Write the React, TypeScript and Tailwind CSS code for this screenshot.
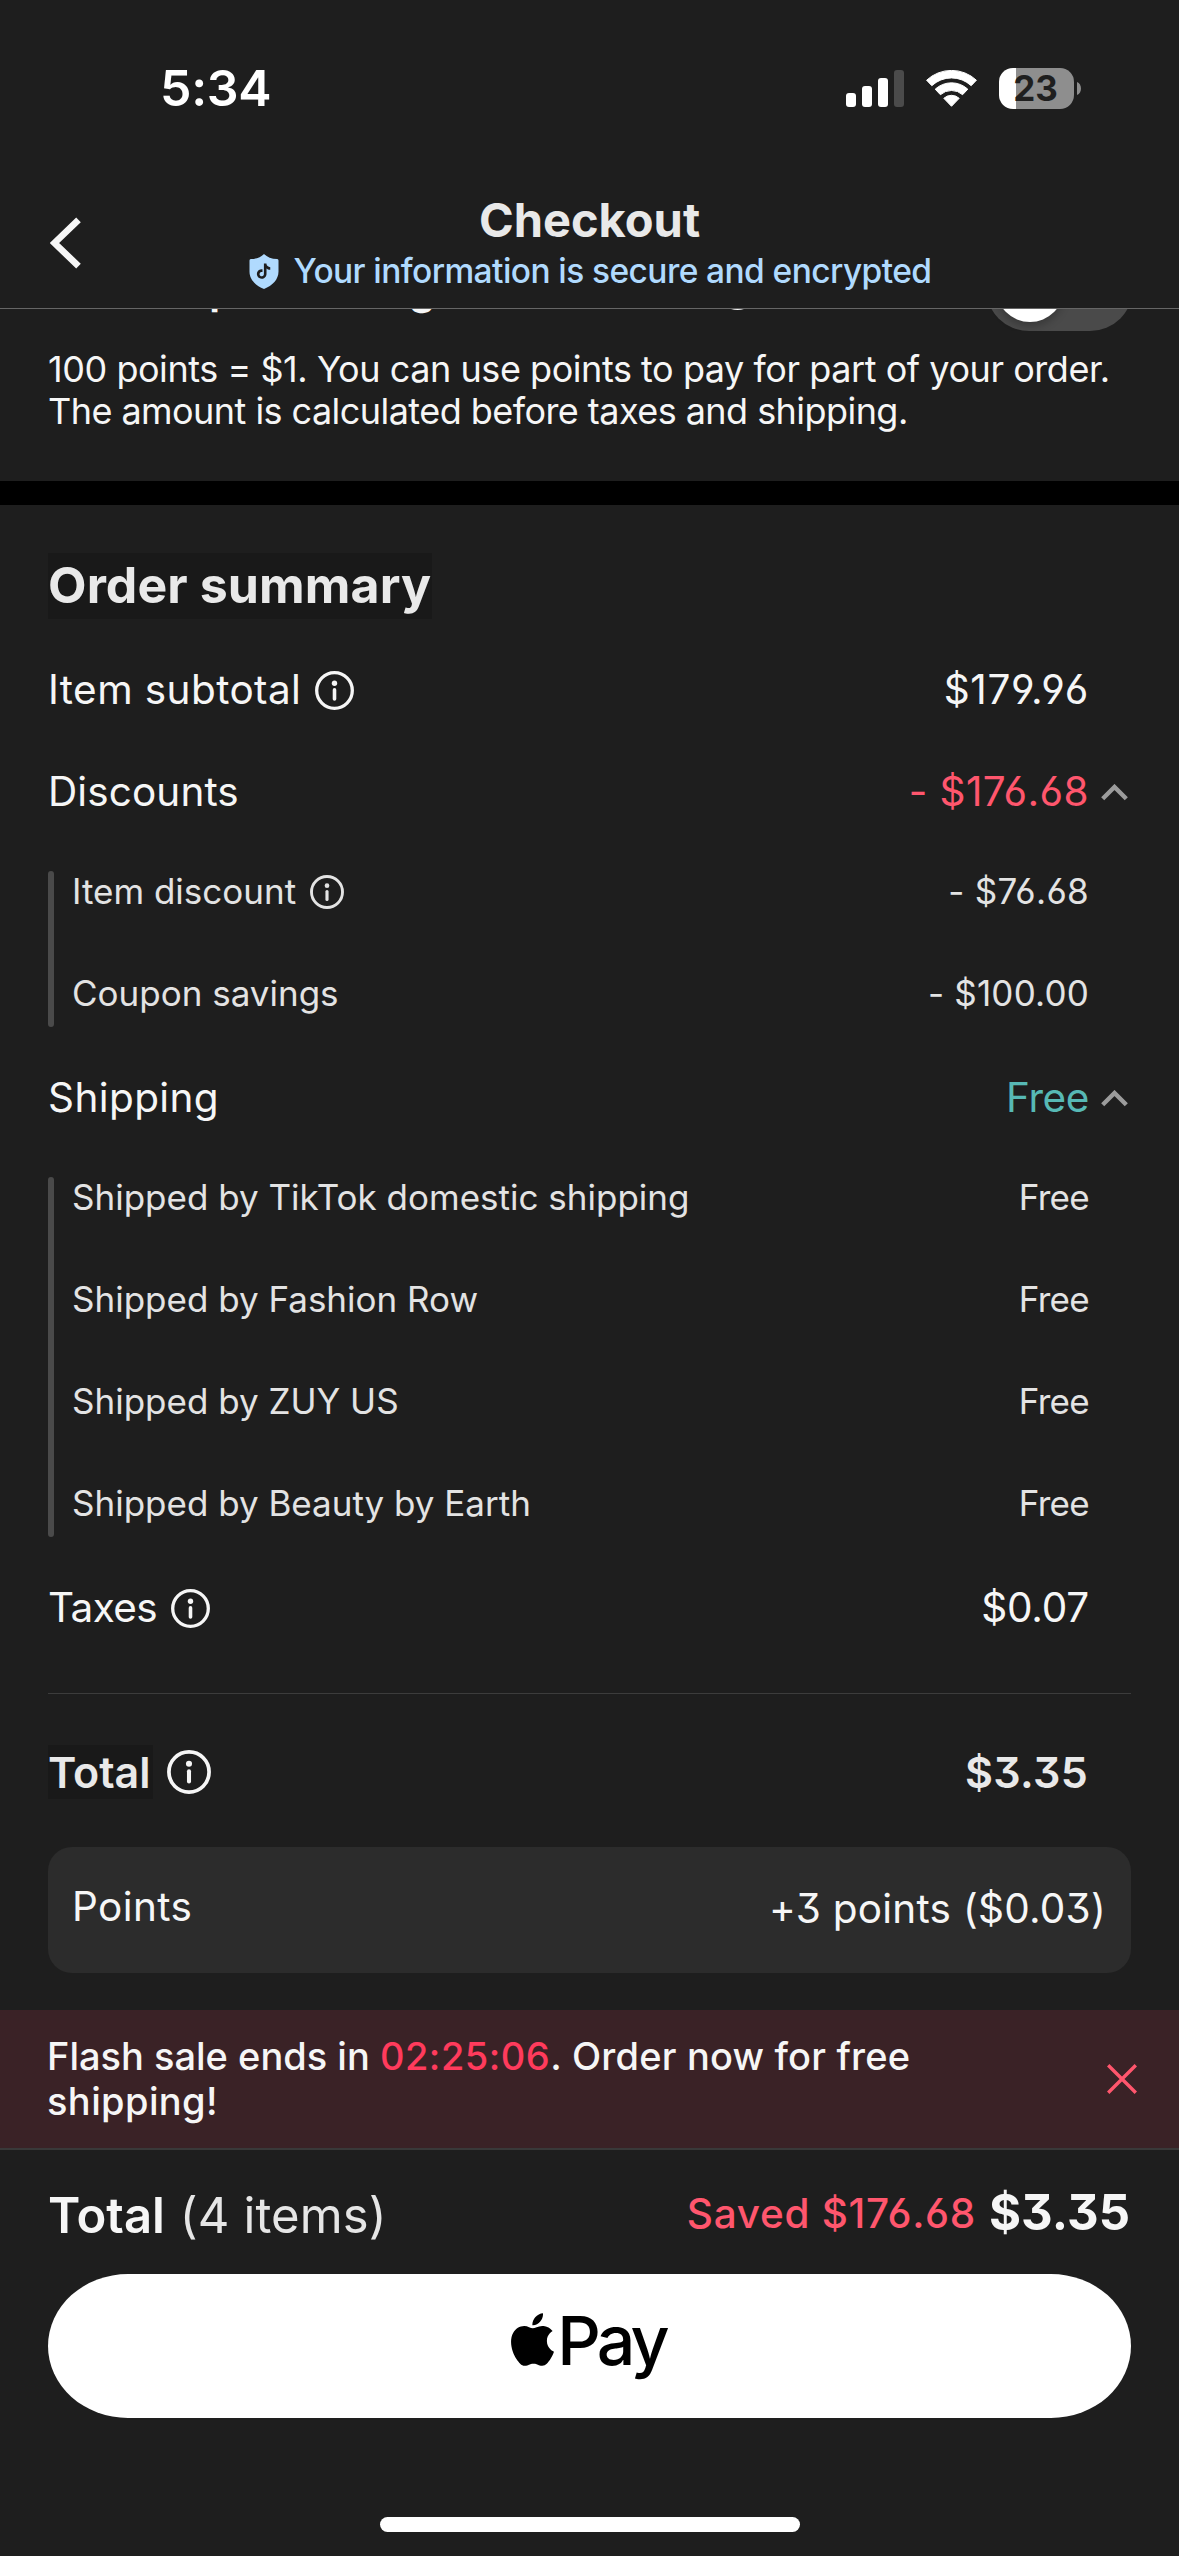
import React from "react";

const OPEN_DIGITS = "[font-feature-settings:'cv03','cv04','cv09']";

function InfoIcon({ className }: { className: string }) {
  return (
    <svg viewBox="0 0 39 39" fill="none" className={`shrink-0 ${className}`}>
      <circle cx="19.5" cy="19.5" r="17.8" stroke="currentColor" strokeWidth="3.3" />
      <circle cx="19.5" cy="12.2" r="2.7" fill="currentColor" />
      <path d="M19.5 18.9V28" stroke="currentColor" strokeWidth="3.6" strokeLinecap="round" />
    </svg>
  );
}

function ChevronUp() {
  return (
    <svg viewBox="0 0 27 17" fill="none" className="h-[17px] w-[27px] text-[#9c9c9c]">
      <path d="M1.7 14.7 13.5 3 25.3 14.7" stroke="currentColor" strokeWidth="4.4" />
    </svg>
  );
}

function StatusBar() {
  return (
    <div className="flex h-[176px] items-center justify-between pl-[160px] pr-[98px] text-white">
      <span className="text-[50px] font-semibold leading-[50px] tracking-[-0.3px]">5:34</span>
      <div className="flex items-center">
        <svg viewBox="0 0 58 37" className="h-[37px] w-[58px]">
          <rect x="0" y="23" width="10" height="14" rx="3" fill="#fff" />
          <rect x="16" y="16" width="10" height="21" rx="3" fill="#fff" />
          <rect x="32" y="8" width="10" height="29" rx="3" fill="#fff" />
          <rect x="48" y="0" width="10" height="37" rx="3" fill="#4b4b4b" />
        </svg>
        <svg viewBox="0 0 51 37" className="ml-[22px] h-[37px] w-[51px]" fill="#fff" stroke="#fff" strokeWidth="1" strokeLinejoin="round">
          <path d="M.6 10.2A36.5 36.5 0 0 1 50.4 10.2L45.2 15.7A28.8 28.8 0 0 0 5.8 15.7Z" />
          <path d="M9.2 19.2A24 24 0 0 1 41.8 19.2L36.6 24.7A16.7 16.7 0 0 0 14.4 24.7Z" />
          <path d="M17.8 28.3A11.4 11.4 0 0 1 33.2 28.3L25.5 36.3Z" />
        </svg>
        <div className="ml-[22px] flex h-[41px] w-[75px] items-center justify-center overflow-hidden rounded-[14px] bg-[linear-gradient(to_right,#fff_17px,#8e8e8e_17px)]">
          <span className="pr-[2px] text-[35px] font-bold leading-[41px] text-[#1f1f1f]">23</span>
        </div>
        <svg viewBox="0 0 4 13" className="ml-[3px] h-[13px] w-[4px]">
          <path d="M0 0C5.3 2 5.3 11 0 13Z" fill="#8e8e8e" />
        </svg>
      </div>
    </div>
  );
}

function ShieldIcon() {
  return (
    <svg viewBox="0 0 30 35" className="h-[35px] w-[30px]">
      <path
        d="M15 0C18.2 3.2 22.500 4.900 28.200 5.100Q29.500 5.300 29.500 6.600V17.500C29.500 25.500 23.500 31.500 15 35C6.500 31.500.5 25.500.5 17.500V6.600Q.5 5.300 1.800 5.100C7.500 4.900 11.800 3.200 15 0Z"
        fill="#b0dafe"
      />
      <path
        transform="translate(6.900 9.400) scale(.64)"
        fill="#1e1e1e"
        d="M12.525.02c1.31-.02 2.61-.01 3.91-.02.08 1.53.63 3.09 1.75 4.17 1.12 1.11 2.7 1.62 4.24 1.79v4.03c-1.44-.05-2.89-.35-4.2-.97-.57-.26-1.1-.59-1.62-.93-.01 2.92.01 5.84-.02 8.75-.08 1.4-.54 2.79-1.35 3.94-1.31 1.92-3.58 3.17-5.91 3.21-1.43.08-2.86-.31-4.08-1.03-2.02-1.19-3.44-3.37-3.65-5.71-.02-.5-.03-1-.01-1.49.18-1.9 1.12-3.72 2.58-4.96 1.66-1.44 3.98-2.13 6.15-1.72.02 1.48-.04 2.96-.04 4.44-.99-.32-2.15-.23-3.02.37-.63.41-1.11 1.04-1.36 1.75-.21.51-.15 1.07-.14 1.61.24 1.64 1.82 3.02 3.5 2.87 1.12-.01 2.19-.66 2.77-1.61.19-.33.4-.67.41-1.06.1-1.79.06-3.57.07-5.36.01-4.03-.01-8.05.02-12.07z"
      />
    </svg>
  );
}

function Header() {
  return (
    <header className="flex h-[133px] border-b border-[#666]">
      <button className="flex w-[132px] items-center pl-[50px] pt-[2px]" aria-label="Back">
        <svg viewBox="0 0 31 52" fill="none" className="h-[52px] w-[31px]">
          <path d="M28.500 2.800 4.500 26 28.500 49.200" stroke="#f6f6f6" strokeWidth="6.600" strokeLinejoin="miter" />
        </svg>
      </button>
      <div className="flex flex-1 flex-col items-center pt-4">
        <h1 className="text-[47px] font-bold leading-[56px] text-[#e9e9e9]">Checkout</h1>
        <div className="flex h-[46px] items-center gap-[15px] pl-px text-[#b0dafe]">
          <ShieldIcon />
          <span className="whitespace-nowrap text-[33.5px] font-medium leading-[46px] tracking-[-0.58px]">
            Your information is secure and encrypted
          </span>
        </div>
      </div>
      <div className="w-[132px]" />
    </header>
  );
}

function PointsSection() {
  return (
    <section className="h-[172px] pl-[48px] pr-12 text-[#f6f6f6]">
      <div className="flex h-[22px] items-end overflow-hidden">
        <div className="flex h-[86px] w-full shrink-0 items-center">
          <span className="ml-[161px] text-[43px] font-semibold leading-[46px]">p</span>
          <span className="ml-[173px] text-[43px] font-semibold leading-[46px]">g</span>
          <InfoIcon className="ml-[280px] size-[43px]" />
          <div className="-mr-[2px] ml-auto flex h-[86px] w-[147px] items-center rounded-full bg-[#4a4a4a] pl-[10px]">
            <div className="size-[68px] rounded-full bg-white shadow-[0_4px_8px_rgba(0,0,0,0.25)]" />
          </div>
        </div>
      </div>
      <div className="mt-[17px] whitespace-nowrap text-[36px] leading-[42px]">
        <p className="tracking-[-0.45px]">100 points = $1. You can use points to pay for part of your order.</p>
        <p className="tracking-[-0.55px]">The amount is calculated before taxes and shipping.</p>
      </div>
    </section>
  );
}

type RowProps = {
  label: string;
  value: string;
  info?: boolean;
  chevron?: boolean;
  labelClass?: string;
  valueClass?: string;
};

function Row({ label, value, info, chevron, labelClass = "", valueClass = "" }: RowProps) {
  return (
    <div className="flex h-[102px] items-center text-[40.5px] text-[#f6f6f6]">
      <span className={`pt-px ${labelClass}`}>{label}</span>
      {info && <InfoIcon className="ml-[14px] size-[39px]" />}
      <span className={`ml-auto pt-px ${OPEN_DIGITS} ${valueClass}`}>{value}</span>
      <div className="flex w-[42px] justify-end pr-[3px]">{chevron && <ChevronUp />}</div>
    </div>
  );
}

type SubItem = { label: string; value: string; info?: boolean; valueClass?: string };

function SubGroup({ items }: { items: SubItem[] }) {
  return (
    <div className="mt-[28px] flex gap-[18px]">
      <div className="w-[6px] rounded-full bg-[#4a4a4a]" />
      <div className="flex flex-1 flex-col gap-[60px] pb-3">
        {items.map((it) => (
          <div key={it.label} className="flex h-[42px] items-center pr-[42px] text-[35px] leading-[40px] text-[#e3e3e3]">
            <span className="pb-[2px]">{it.label}</span>
            {it.info && <InfoIcon className="ml-[14px] size-[34px]" />}
            <span className={`ml-auto pb-[2px] ${OPEN_DIGITS} ${it.valueClass ?? ""}`}>{it.value}</span>
          </div>
        ))}
      </div>
    </div>
  );
}

function OrderSummary() {
  return (
    <section className="h-[1505px] px-12 pt-12">
      <h2 className="h-[66px] w-[384px] whitespace-nowrap bg-[#191919] text-[50px] font-bold leading-[64px] tracking-[0.1px] text-[#e9e9e9]">
        Order summary
      </h2>
      <div className="mt-5">
        <Row label="Item subtotal" value="$179.96" info labelClass="tracking-[0.4px]" valueClass="tracking-[0.6px]" />
        <Row label="Discounts" value="- $176.68" chevron labelClass="tracking-[0.1px]" valueClass="text-[#ff566d] tracking-[0.4px]" />
      </div>
      <SubGroup
        items={[
          { label: "Item discount", value: "- $76.68", info: true, valueClass: "tracking-[0.3px]" },
          { label: "Coupon savings", value: "- $100.00", valueClass: "tracking-[0.2px]" },
        ]}
      />
      <div className="mt-5">
        <Row label="Shipping" value="Free" chevron labelClass="tracking-[0.4px]" valueClass="text-[#57b9b5] tracking-[-0.4px]" />
      </div>
      <SubGroup
        items={[
          { label: "Shipped by TikTok domestic shipping", value: "Free", valueClass: "tracking-[-0.7px]" },
          { label: "Shipped by Fashion Row", value: "Free", valueClass: "tracking-[-0.7px]" },
          { label: "Shipped by ZUY US", value: "Free", valueClass: "tracking-[-0.7px]" },
          { label: "Shipped by Beauty by Earth", value: "Free", valueClass: "tracking-[-0.7px]" },
        ]}
      />
      <div className="mt-5">
        <Row label="Taxes" value="$0.07" info labelClass="tracking-[-0.6px]" valueClass="tracking-[-0.2px]" />
      </div>
      <div className="mt-[34px] h-px bg-[#3c3c3c]" />
      <div className="mt-[51px] flex h-[54px] items-center text-[43px] font-semibold leading-[54px]">
        <span className="w-[105px] bg-[#191919] text-[#e9e9e9]">Total</span>
        <InfoIcon className="ml-[14px] size-[44px] text-[#f6f6f6]" />
        <span className={`ml-auto mr-[43px] tracking-[0.3px] text-[#e9e9e9] ${OPEN_DIGITS}`}>$3.35</span>
      </div>
      <div className="mt-12 flex h-[126px] items-center justify-between rounded-[24px] bg-[#2c2c2c] pl-[24px] pr-[25px] text-[40.5px] text-[#f6f6f6]">
        <span className="pb-[5px] tracking-[0.4px]">Points</span>
        <span className={`pb-px tracking-[0.25px] ${OPEN_DIGITS}`}>+3 points ($0.03)</span>
      </div>
    </section>
  );
}

function FlashSaleBanner() {
  return (
    <div className="flex h-[138px] items-center justify-between bg-[#3a2226] pl-[47px] pr-[42px]">
      <p className="whitespace-nowrap text-[38px] font-medium leading-[45px] text-[#f6f6f6]">
        Flash sale ends in <span className="tracking-[0.5px] text-[#ff3b5c]">02:25:06</span>
        <span className="tracking-[0.2px]">. Order now for free</span>
        <br />
        <span className="tracking-[0.4px]">shipping!</span>
      </p>
      <svg viewBox="0 0 30 30" fill="none" className="size-[30px]">
        <path d="M1.200 1.200 28.800 28.800M28.800 1.200 1.200 28.800" stroke="#ff566d" strokeWidth="3.4" />
      </svg>
    </div>
  );
}

function Footer() {
  return (
    <footer className="border-t-2 border-[#393939] px-12">
      <div className="mt-[33px] flex h-[66px] items-center whitespace-nowrap text-[#f6f6f6]">
        <span className="text-[49px] font-semibold leading-[66px]">Total</span>
        <span className="ml-[15px] text-[49px] leading-[66px] tracking-[0.1px] text-[#e6e6e6]">(4 items)</span>
        <span className={`ml-auto pb-[3px] text-[40.5px] font-medium tracking-[0.7px] text-[#ff566d] ${OPEN_DIGITS}`}>Saved $176.68</span>
        <span className={`ml-[13px] mr-px pb-[7px] text-[49px] font-bold ${OPEN_DIGITS}`}>$3.35</span>
      </div>
      <button className="mt-[25px] flex h-[144px] w-full items-start justify-center rounded-[80px/72px] bg-white pr-[2px] pt-[39px] text-black">
        <svg viewBox="2.2 0 19.6 24" className="h-[53px] w-[43px]" fill="currentColor">
          <path d="M12.152 6.896c-.948 0-2.415-1.078-3.96-1.04-2.04.027-3.91 1.183-4.961 3.014-2.117 3.675-.546 9.103 1.519 12.09 1.013 1.454 2.208 3.09 3.792 3.039 1.52-.065 2.09-.987 3.935-.987 1.831 0 2.35.987 3.96.948 1.637-.026 2.676-1.48 3.676-2.948 1.156-1.688 1.636-3.325 1.662-3.415-.039-.013-3.182-1.221-3.22-4.857-.026-3.04 2.48-4.494 2.597-4.559-1.429-2.09-3.623-2.324-4.39-2.376-2-.156-3.675 1.09-4.61 1.09zM15.53 3.83c.843-1.012 1.4-2.427 1.245-3.83-1.207.052-2.662.805-3.532 1.818-.78.896-1.454 2.338-1.273 3.714 1.338.104 2.715-.688 3.559-1.701" />
        </svg>
        <span className="ml-[3px] text-[68px] font-medium leading-[55px] tracking-[-3.8px]">Pay</span>
      </button>
      <div className="mx-auto mt-[99px] h-[15px] w-[420px] rounded-full bg-white" />
    </footer>
  );
}

export default function App() {
  return (
    <main className="h-[2556px] w-[1179px] overflow-hidden bg-[#1e1e1e] font-['Inter',sans-serif]">
      <StatusBar />
      <Header />
      <PointsSection />
      <div className="h-6 bg-black" />
      <OrderSummary />
      <FlashSaleBanner />
      <Footer />
    </main>
  );
}
